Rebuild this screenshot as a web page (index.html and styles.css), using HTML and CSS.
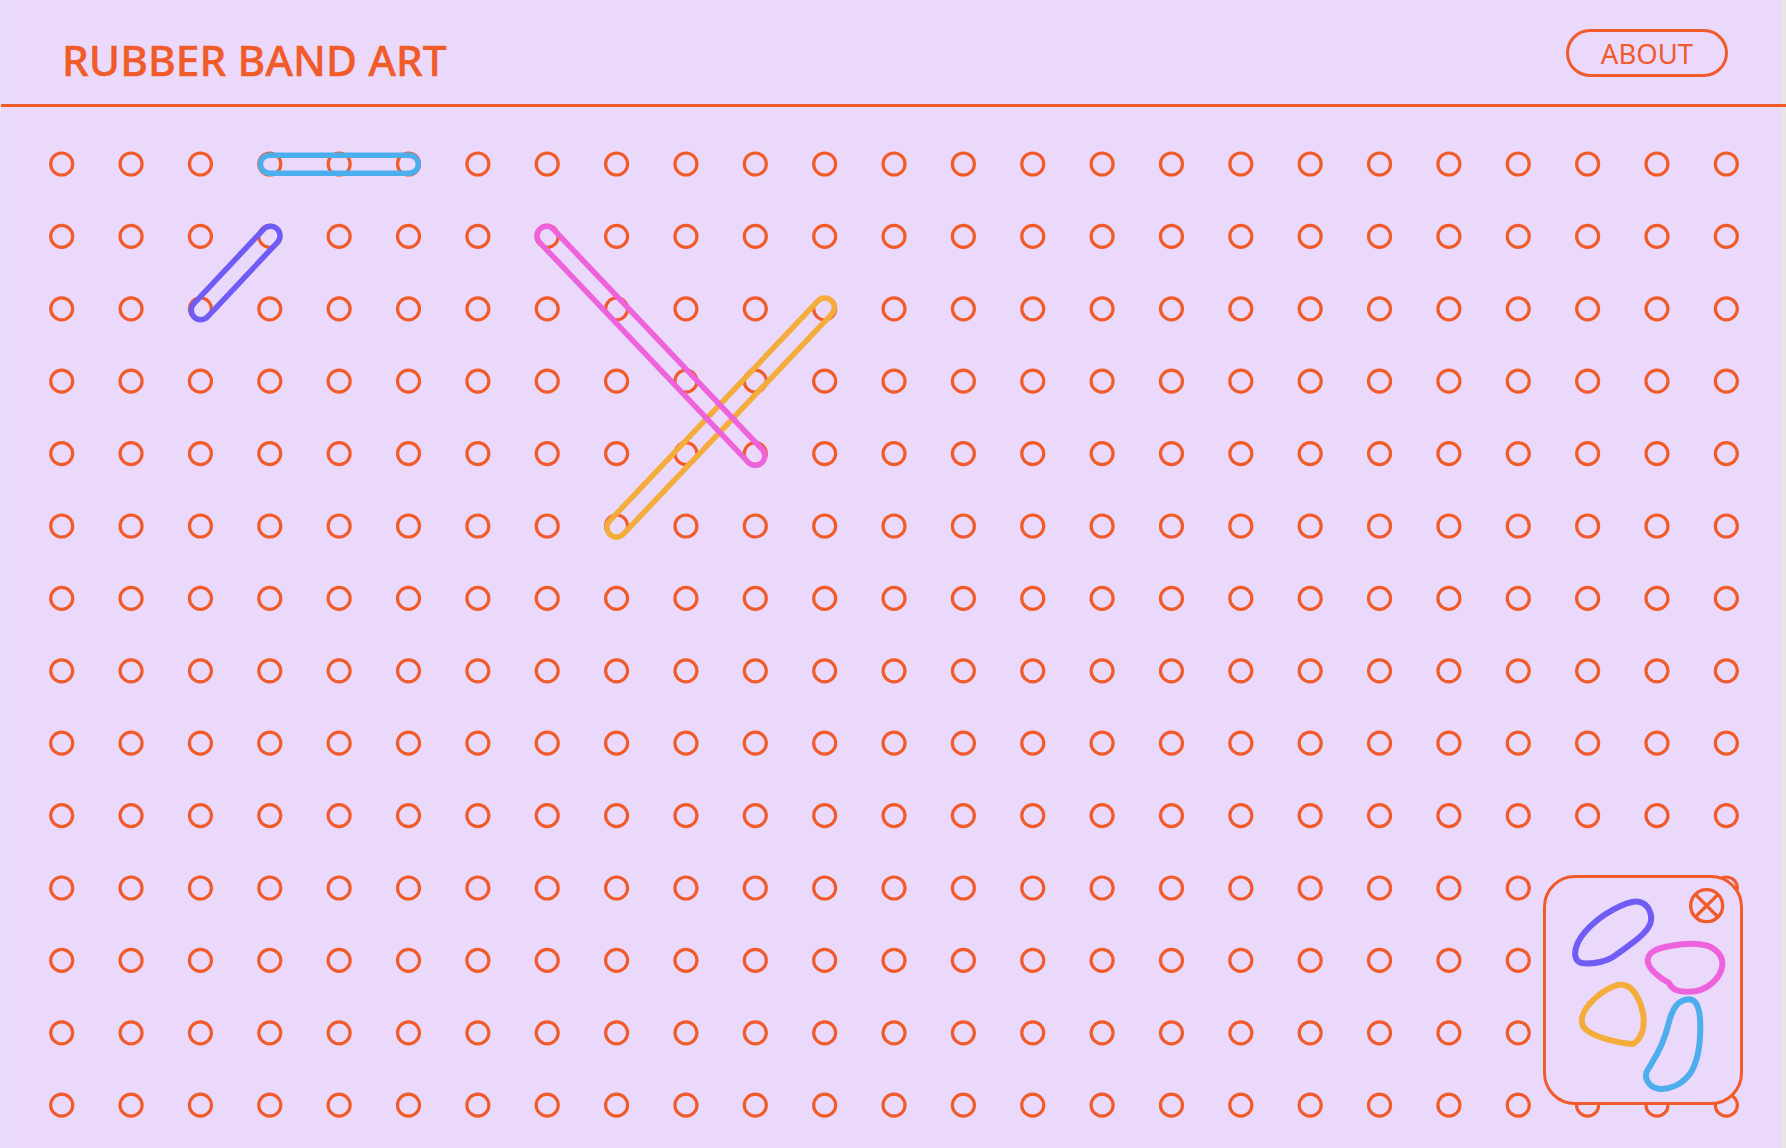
FILE: index.html
```html
<!DOCTYPE html>
<html lang="en">
<head>
    <meta charset="UTF-8">
    <title>Rubber Band Art</title>
    <link rel="stylesheet" href="styles.css">
</head>
<body>
    <div class="page">
        <header class="topbar">
            <h1 class="title">RUBBER BAND ART</h1>
            <button class="about">ABOUT</button>
        </header>

        <svg id="board" class="board" width="1781" height="1041" viewBox="0 107 1781 1041"></svg>

        <aside class="tray">
            <svg class="tray-art" width="200" height="230" viewBox="128 75 600 690">
                <path class="blob blob-purple" d="M345 316C320 335 280 342 250 340C225 338 220 315 228 290C240 250 290 205 340 178C365 165 395 152 415 155C445 160 458 195 450 220C440 250 395 280 345 316Z"/>
                <path class="blob blob-pink" d="M505 398C480 385 440 355 442 330C445 305 470 295 510 288C550 280 590 278 620 287C650 297 668 320 666 345C662 385 620 425 565 425C535 425 515 420 505 398Z"/>
                <path class="blob blob-orange" d="M398 582C360 580 290 565 258 540C235 520 245 490 265 465C295 430 340 400 370 405C400 410 420 450 428 490C435 530 425 565 398 582Z"/>
                <path class="blob blob-blue" d="M455 638C480 600 495 560 505 520C515 480 530 450 565 448C595 448 600 490 600 530C600 580 595 630 570 670C545 705 505 720 475 716C445 712 425 680 445 655C450 648 452 645 455 638Z"/>
                <circle class="close" cx="619" cy="167" r="48"/>
                <path class="close" d="M585 133L653 201M653 133L585 201"/>
            </svg>
        </aside>
    </div>

    <script src="board.js"></script>
</body>
</html>
```

FILE: styles.css
```css
body {
    margin: 0;
    background-color: #e6e6e6;
    font-family: "Noto Sans", Arial, sans-serif;
}
.page {
    position: relative;
    height: 1148px;
    margin: 0 4px 0 1px;
    background-color: #ead9fb;
}
.topbar {
    display: flex;
    justify-content: space-between;
    align-items: flex-start;
    height: 104px;
    margin-right: -4px;
    padding: 0 58px 0 61px;
    border-bottom: 3px solid #f15a29;
}
.title {
    margin: 31px 0 0;
    font-size: 42.5px;
    line-height: 58px;
    font-weight: 500;
    -webkit-text-stroke: 0.4px #f15a29;
    color: #f15a29;
}
.about {
    width: 162px;
    height: 48px;
    margin-top: 29px;
    padding: 0;
    background: none;
    border: 3px solid #f15a29;
    border-radius: 24px;
    font-family: "Noto Sans", Arial, sans-serif;
    font-size: 27.5px;
    color: #f15a29;
}
.board {
    display: block;
}
.peg {
    fill: none;
    stroke: #f15a29;
    stroke-width: 3.2;
}
.band {
    fill: none;
    stroke-width: 5.5;
}
/* 右下のトレイ */
.tray {
    position: absolute;
    left: 1541.7px;
    top: 875px;
    box-sizing: border-box;
    width: 200px;
    height: 230px;
    background-color: #ead9fb;
    border: 3px solid #f15a29;
    border-radius: 32px;
}
.tray-art {
    display: block;
    margin: -3px;
}
.blob {
    fill: none;
    stroke-width: 18;
}
.blob-purple { stroke: #6f5cf5; }
.blob-pink { stroke: #ee62db; }
.blob-orange { stroke: #f4ac3a; }
.blob-blue { stroke: #4daeee; }
.close {
    fill: none;
    stroke: #f15a29;
    stroke-width: 10;
}
```

FILE: board.js
```js
const board = document.getElementById('board');
const ns = 'http://www.w3.org/2000/svg';

const cols = 25;
const rows = 14;
const startX = 60.7; // page starts 1px in
const startY = 164;
const stepX = 69.36;
const stepY = 72.4;

for (let r = 0; r < rows; r++) {
    for (let c = 0; c < cols; c++) {
        const peg = document.createElementNS(ns, 'circle');
        peg.setAttribute('class', 'peg');
        peg.setAttribute('cx', startX + c * stepX);
        peg.setAttribute('cy', startY + r * stepY);
        peg.setAttribute('r', 11);
        board.appendChild(peg);
    }
}

function addBand(x1, y1, x2, y2, radius, color) {
    const cx = (x1 + x2) / 2;
    const cy = (y1 + y2) / 2;
    const len = Math.hypot(x2 - x1, y2 - y1);
    const angle = Math.atan2(y2 - y1, x2 - x1) * 180 / Math.PI;
    const band = document.createElementNS(ns, 'rect');
    band.setAttribute('class', 'band');
    band.setAttribute('x', cx - len / 2 - radius);
    band.setAttribute('y', cy - radius);
    band.setAttribute('width', len + radius * 2);
    band.setAttribute('height', radius * 2);
    band.setAttribute('rx', radius);
    band.setAttribute('stroke', color);
    band.setAttribute('transform', 'rotate(' + angle + ' ' + cx + ' ' + cy + ')');
    board.appendChild(band);
}

addBand(268.5, 164.2, 408.3, 164.2, 9, '#4daeee');
addBand(199.8, 310.2, 269.5, 235.8, 9.5, '#6f5cf5');
addBand(615.5, 527.5, 823.8, 307.5, 9.5, '#f4ac3a');
addBand(545.5, 235.8, 754.2, 455.8, 9.5, '#ee62db');
```
